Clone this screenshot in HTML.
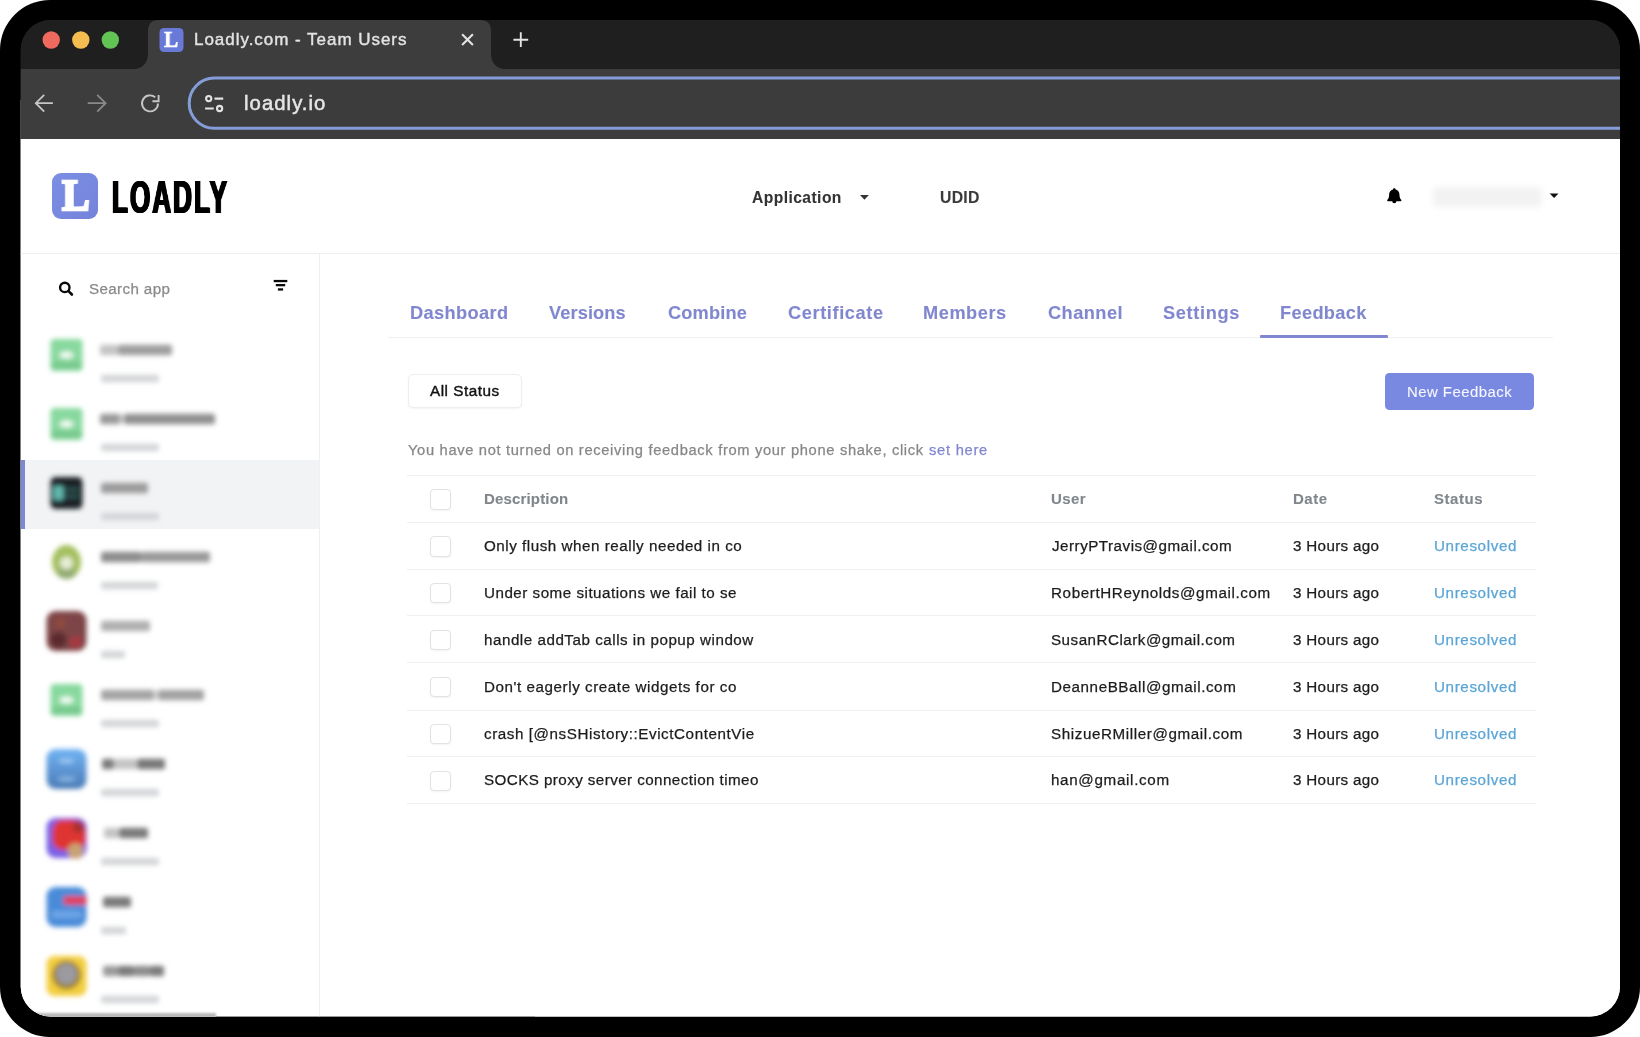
<!DOCTYPE html>
<html lang="en"><head><meta charset="utf-8"><title>Loadly.com - Team Users</title>
<style>
html,body{margin:0;padding:0;background:#fff;width:1640px;height:1037px;overflow:hidden}
body{font-family:"Liberation Sans", sans-serif;}
#frame{position:absolute;left:0;top:0;width:1640px;height:1037px;background:#000;border-radius:50px;overflow:hidden}
#screen{position:absolute;left:0;top:0;width:1640px;height:1037px;clip-path:inset(20px 20px 20.4px 20.7px round 30px);background:linear-gradient(#1f1f1f 0,#1f1f1f 100px,#fff 100px)}
.g{display:contents}
.abs{position:absolute}
.t{position:absolute;white-space:pre;line-height:1;font-family:"Liberation Sans", sans-serif;will-change:transform}
</style></head>
<body>
<div id="frame"><div id="screen">
<div class="g" id="browser-chrome">
<div class="abs" style="left:0;top:20px;width:1640px;height:49px;background:#1f1f1f"></div>
<div class="abs" style="left:0;top:69px;width:1640px;height:70px;background:#3e3d3d"></div>
<svg class="abs" style="left:0;top:0" width="1640" height="140" viewBox="0 0 1640 140">
<path d="M131,69.5 Q148,69 148,53 L148,31 Q148,20 159,20 L480,20 Q491,20 491,31 L491,53 Q491,69 508,69.5 Z" fill="#3e3d3d"/>
<circle cx="51.2" cy="40" r="8.7" fill="#ee6a5f"/>
<circle cx="80.8" cy="40" r="8.7" fill="#f5bd4f"/>
<circle cx="110.3" cy="40" r="8.7" fill="#61c454"/>
<rect x="159.5" y="28" width="24" height="24" rx="4.5" fill="#6979d8"/>
<g stroke="#e3e3e3" stroke-width="1.9" fill="none" stroke-linecap="butt">
<path d="M462.1,34.3 L472.9,45.1 M472.9,34.3 L462.1,45.1" stroke-width="2.1"/>
<path d="M513.4,39.7 L528.2,39.7 M520.8,32.3 L520.8,47.1"/>
</g>
<g stroke="#c6c6c6" stroke-width="1.8" fill="none">
<path d="M35.8,103.2 L52.9,103.2 M44.2,94.8 L35.8,103.2 L44.2,111.6"/>
</g>
<g stroke="#8a8a8a" stroke-width="1.8" fill="none">
<path d="M87.7,103.2 L105.6,103.2 M97.2,94.8 L105.6,103.2 L97.2,111.6"/>
</g>
<g stroke="#c6c6c6" stroke-width="1.9" fill="none">
<path d="M158.0,103.4 A8,8 0 1 1 155.2,97.3"/>
<path d="M158.6,95 L158.6,101.2 L152.4,101.2" />
</g>
<rect x="189.2" y="78.1" width="1500" height="50.2" rx="25.1" fill="#3d3c3d" stroke="#849cd8" stroke-width="3"/>
<g stroke="#e3e3e3" stroke-width="2.1" fill="none">
<circle cx="208.7" cy="98.6" r="2.6"/>
<path d="M214.5,98.6 L223.2,98.6"/>
<path d="M205.1,108.5 L213.8,108.5"/>
<circle cx="219.6" cy="108.5" r="2.6"/>
</g>
</svg>
<div class="t" style="left:163.9px;top:27.6px;font-size:23px;font-weight:700;color:#fff;-webkit-text-stroke:0.7px #fff;font-family:'Liberation Serif',serif;transform-origin:0 0;transform:scaleX(0.92)">L</div>
<div class="t" style="left:194.48px;top:31.00px;font-size:17.0px;font-weight:400;letter-spacing:0.969px;color:#e3e3e3;-webkit-text-stroke:0.4px">Loadly.com - Team Users</div>
<div class="t" style="left:243.98px;top:92.85px;font-size:20.3px;font-weight:400;letter-spacing:1.062px;color:#e6e6e6;-webkit-text-stroke:0.5px">loadly.io</div>
</div>
<div class="g" id="page">
<div class="abs" style="left:0;top:139px;width:1640px;height:900px;background:#fff"></div>
<header class="g">
<div class="abs" style="left:0;top:253px;width:1640px;height:1px;background:#eeeeef"></div>
<div class="abs" style="left:52px;top:173px;width:46.2px;height:46px;border-radius:9px;background:linear-gradient(135deg,#7b8fe4 0%,#7483da 100%)"></div>
<div class="t" style="left:61.8px;top:172.9px;font-size:45px;font-weight:700;color:#fff;-webkit-text-stroke:2.5px #fff;font-family:'Liberation Serif',serif;transform-origin:0 0;transform:scaleX(0.92)">L</div>
<div class="t" id="brand" style="left:112.4px;top:174.7px;font-size:45.4px;font-weight:700;color:#000;transform-origin:0 0;transform:scaleX(0.575);letter-spacing:3.5px;text-shadow:1.5px 0 0 #000,-1.5px 0 0 #000,0.7px 0 0 #000,-0.7px 0 0 #000">LOADLY</div>
<svg class="abs" style="left:0;top:139px" width="1640" height="115" viewBox="0 139 1640 115">
<path d="M860.0,195.0 L868.9,195.0 L864.45,199.7 Z" fill="#333"/>
<path d="M1549.7,193.6 L1558.5,193.6 L1554.1,198.1 Z" fill="#111"/>
<path transform="translate(1394.3 196) scale(0.88) translate(-1394.3 -196.3)" d="M1394.3,187.6 c-0.9,0 -1.5,0.6 -1.5,1.4 c-3,0.7 -4.4,3.2 -4.4,6.2 c0,3.6 -1.2,4.6 -2,5.5 c-0.5,0.5 -0.3,1.6 0.7,1.6 h14.4 c1,0 1.2,-1.1 0.7,-1.6 c-0.8,-0.9 -2,-1.9 -2,-5.5 c0,-3 -1.4,-5.5 -4.4,-6.2 c0,-0.8 -0.6,-1.4 -1.5,-1.4 z M1391.9,202 a2.4,2.6 0 0 0 4.8,0 z" fill="#000"/>
</svg>
<div class="abs" style="left:1433px;top:187px;width:109px;height:20px;background:#f2f2f2;border-radius:5px;filter:blur(3px)"></div>
<div class="t" style="left:752.06px;top:189.70px;font-size:15.6px;font-weight:700;letter-spacing:0.449px;color:#333;-webkit-text-stroke:0.1px">Application</div>
<div class="t" style="left:939.55px;top:189.60px;font-size:15.8px;font-weight:700;letter-spacing:0.225px;color:#3a3a3a;-webkit-text-stroke:0.1px">UDID</div>
</header>
<aside class="g">
<div class="abs" style="left:319px;top:254px;width:1px;height:780px;background:#efeff0"></div>
<div class="abs" style="left:21px;top:460px;width:298px;height:69px;background:#f2f3f5"></div>
<div class="abs" style="left:21px;top:460px;width:4px;height:69px;background:#7c8ad6"></div>
<svg class="abs" style="left:0;top:254px" width="340" height="80" viewBox="0 254 340 80">
<circle cx="64.8" cy="287.4" r="4.7" fill="none" stroke="#0a0a0a" stroke-width="2.4"/>
<path d="M68.5,291.1 L71.9,294.5" stroke="#0a0a0a" stroke-width="2.6" stroke-linecap="round"/>
<rect x="273.7" y="279.9" width="13.6" height="2.3" fill="#0a0a0a"/>
<rect x="275.8" y="284.0" width="9.4" height="2.3" fill="#0a0a0a"/>
<rect x="277.9" y="288.3" width="5.2" height="2.3" fill="#0a0a0a"/>
</svg>
<svg class="abs" style="left:21px;top:300px" width="298" height="720" viewBox="21 300 298 720"><defs><filter id="bl" x="-40%" y="-40%" width="180%" height="180%"><feGaussianBlur stdDeviation="2.7"/></filter><filter id="bt" x="-20%" y="-150%" width="140%" height="400%"><feGaussianBlur stdDeviation="2.5"/></filter><linearGradient id="gblue" x1="0" y1="0" x2="0" y2="1"><stop offset="0" stop-color="#70b3f3"/><stop offset="1" stop-color="#4a7ab6"/></linearGradient></defs><g filter="url(#bl)"><rect x="50.5" y="339" width="32" height="32" rx="4" fill="#88d99f"/><rect x="51.5" y="362" width="30" height="7" fill="#78c98e"/><ellipse cx="66.5" cy="355" rx="7" ry="3.6" fill="#f2fbf4"/></g><g filter="url(#bt)"><rect x="100" y="344.8" width="18" height="10.5" rx="2" fill="#c4c4c4"/><rect x="118" y="344.8" width="54" height="10.5" rx="2" fill="#9e9e9e"/></g><g filter="url(#bt)"><rect x="101" y="374.7" width="58" height="7.5" rx="2" fill="#d3d5d8"/></g><g filter="url(#bl)"><rect x="50.5" y="408" width="32" height="32" rx="4" fill="#88d99f"/><rect x="51.5" y="431" width="30" height="7" fill="#78c98e"/><ellipse cx="66.5" cy="424" rx="7" ry="3.6" fill="#f2fbf4"/></g><g filter="url(#bt)"><rect x="100" y="413.8" width="20" height="10.5" rx="2" fill="#9a9a9a"/><rect x="120" y="413.8" width="4" height="10.5" rx="2" fill="#d0d0d0"/><rect x="124" y="413.8" width="91" height="10.5" rx="2" fill="#909090"/></g><g filter="url(#bt)"><rect x="101" y="443.7" width="58" height="7.5" rx="2" fill="#d3d5d8"/></g><g filter="url(#bl)"><rect x="50.5" y="477" width="32" height="32" rx="5" fill="#1b2325"/><rect x="53.5" y="486" width="10" height="14" rx="2" fill="#62b8ad"/><rect x="64.5" y="488" width="14" height="3" fill="#2d5b58"/><rect x="64.5" y="495" width="14" height="3" fill="#2d5b58"/></g><g filter="url(#bt)"><rect x="101" y="482.8" width="47" height="10.5" rx="2" fill="#9c9c9c"/></g><g filter="url(#bt)"><rect x="101" y="512.7" width="58" height="7.5" rx="2" fill="#d3d5d8"/></g><g filter="url(#bl)"><ellipse cx="66.5" cy="562" rx="14.5" ry="17" fill="#a4c05e"/><ellipse cx="66.5" cy="573" rx="9" ry="6" fill="#93ab72"/><circle cx="66.5" cy="563" r="6.5" fill="#e6edd6"/></g><g filter="url(#bt)"><rect x="101" y="551.8" width="40" height="10.5" rx="2" fill="#8c8c8c"/><rect x="141" y="551.8" width="69" height="10.5" rx="2" fill="#9a9a9a"/></g><g filter="url(#bt)"><rect x="101" y="581.7" width="57" height="7.5" rx="2" fill="#d3d5d8"/></g><g filter="url(#bl)"><rect x="46.5" y="611" width="40" height="40" rx="9" fill="#7d4446"/><circle cx="58.5" cy="640" r="8" fill="#5b2b2d"/><circle cx="75.5" cy="642" r="6" fill="#a83843"/><circle cx="60.5" cy="623" r="6" fill="#8d4a40"/></g><g filter="url(#bt)"><rect x="101" y="620.8" width="49" height="10.5" rx="2" fill="#b0b0b0"/></g><g filter="url(#bt)"><rect x="101" y="650.7" width="24" height="7.5" rx="2" fill="#d3d5d8"/></g><g filter="url(#bl)"><rect x="50.5" y="684" width="32" height="32" rx="4" fill="#88d99f"/><rect x="51.5" y="707" width="30" height="7" fill="#78c98e"/><ellipse cx="66.5" cy="700" rx="7" ry="3.6" fill="#f2fbf4"/></g><g filter="url(#bt)"><rect x="101" y="689.8" width="53" height="10.5" rx="2" fill="#a4a4a4"/><rect x="154" y="689.8" width="4" height="10.5" rx="2" fill="#d8d8d8"/><rect x="158" y="689.8" width="46" height="10.5" rx="2" fill="#a2a2a2"/></g><g filter="url(#bt)"><rect x="101" y="719.7" width="58" height="7.5" rx="2" fill="#d3d5d8"/></g><g filter="url(#bl)"><rect x="46.5" y="749" width="40" height="40" rx="9" fill="url(#gblue)"/><ellipse cx="66.5" cy="761" rx="8" ry="2" fill="#a4ccf6"/><ellipse cx="66.5" cy="779" rx="9" ry="2.5" fill="#88b4e2"/></g><g filter="url(#bt)"><rect x="102" y="758.8" width="12" height="10.5" rx="2" fill="#7a7a7a"/><rect x="114" y="758.8" width="23" height="10.5" rx="2" fill="#c4c4c4"/><rect x="137" y="758.8" width="28" height="10.5" rx="2" fill="#787878"/></g><g filter="url(#bt)"><rect x="101" y="788.7" width="58" height="7.5" rx="2" fill="#d3d5d8"/></g><g filter="url(#bl)"><rect x="46.5" y="818" width="40" height="40" rx="9" fill="#7a60e6"/><rect x="52.5" y="820" width="33" height="30" rx="10" fill="#df3631"/><circle cx="78.5" cy="827" r="6" fill="#a8322e"/><circle cx="75.5" cy="851" r="8" fill="#c9a273"/></g><g filter="url(#bt)"><rect x="104" y="827.8" width="15" height="10.5" rx="2" fill="#c4c4c4"/><rect x="119" y="827.8" width="29" height="10.5" rx="2" fill="#7a7a7a"/></g><g filter="url(#bt)"><rect x="101" y="857.7" width="58" height="7.5" rx="2" fill="#d3d5d8"/></g><g filter="url(#bl)"><rect x="46.5" y="887" width="40" height="40" rx="9" fill="#4a8bd9"/><rect x="63.5" y="896" width="23" height="9" rx="2" fill="#e2405c"/><rect x="51.5" y="911" width="30" height="7" rx="2" fill="#6ea6e6"/></g><g filter="url(#bt)"><rect x="103" y="896.8" width="28" height="10.5" rx="2" fill="#7a7a7a"/></g><g filter="url(#bt)"><rect x="101" y="926.7" width="25" height="7.5" rx="2" fill="#d3d5d8"/></g><g filter="url(#bl)"><rect x="46.5" y="956" width="40" height="40" rx="8" fill="#f3ce3f"/><circle cx="66.5" cy="975" r="14.5" fill="#9c8230"/><circle cx="66.5" cy="974" r="10.5" fill="#9a9aa1"/></g><g filter="url(#bt)"><rect x="103" y="965.8" width="15" height="10.5" rx="2" fill="#9a9a9a"/><rect x="118" y="965.8" width="16" height="10.5" rx="2" fill="#7c7c7c"/><rect x="134" y="965.8" width="16" height="10.5" rx="2" fill="#8c8c8c"/><rect x="150" y="965.8" width="14" height="10.5" rx="2" fill="#7c7c7c"/></g><g filter="url(#bt)"><rect x="101" y="995.7" width="58" height="7.5" rx="2" fill="#d3d5d8"/></g></svg>
<div class="abs" style="left:36px;top:1013px;width:180px;height:6px;background:#b9b9b9;filter:blur(0.8px)"></div>
<div class="abs" style="left:216px;top:1016px;width:319px;height:1px;background:rgba(0,0,0,0.4)"></div>
<div class="t" style="left:89.49px;top:280.90px;font-size:15.2px;font-weight:400;letter-spacing:0.357px;color:#8a8a8a;-webkit-text-stroke:0.25px">Search app</div>
</aside>
<main class="g">
<nav class="g">
<div class="abs" style="left:388px;top:337px;width:1165px;height:1px;background:#f0f0f1"></div>
<div class="abs" style="left:1259.5px;top:335px;width:128px;height:3px;background:#8087cf;border-radius:1px"></div>
<a class="t" style="left:410.11px;top:303.90px;font-size:18.2px;font-weight:700;letter-spacing:0.400px;color:#8087cf;-webkit-text-stroke:0.1px">Dashboard</a>
<a class="t" style="left:549.11px;top:303.90px;font-size:18.2px;font-weight:700;letter-spacing:0.125px;color:#8087cf;-webkit-text-stroke:0.1px">Versions</a>
<a class="t" style="left:667.61px;top:303.90px;font-size:18.2px;font-weight:700;letter-spacing:0.181px;color:#8087cf;-webkit-text-stroke:0.1px">Combine</a>
<a class="t" style="left:787.61px;top:303.90px;font-size:18.2px;font-weight:700;letter-spacing:0.615px;color:#8087cf;-webkit-text-stroke:0.1px">Certificate</a>
<a class="t" style="left:923.31px;top:303.90px;font-size:18.2px;font-weight:700;letter-spacing:0.557px;color:#8087cf;-webkit-text-stroke:0.1px">Members</a>
<a class="t" style="left:1048.01px;top:303.90px;font-size:18.2px;font-weight:700;letter-spacing:0.475px;color:#8087cf;-webkit-text-stroke:0.1px">Channel</a>
<a class="t" style="left:1162.91px;top:303.90px;font-size:18.2px;font-weight:700;letter-spacing:0.650px;color:#8087cf;-webkit-text-stroke:0.1px">Settings</a>
<a class="t" style="left:1280.21px;top:303.90px;font-size:18.2px;font-weight:700;letter-spacing:0.356px;color:#8087cf;-webkit-text-stroke:0.1px">Feedback</a>
</nav>
<section class="g" id="toolbar">
<div class="abs" style="left:407.5px;top:374px;width:114px;height:33.5px;border:1px solid #eeeeee;border-radius:5px;background:#fff;box-shadow:0 1px 2px rgba(0,0,0,0.05);box-sizing:border-box"></div>
<div class="abs" style="left:1385px;top:373.2px;width:149.2px;height:36.8px;border-radius:4.5px;background:#7988e1"></div>
<div class="t" style="left:429.88px;top:382.85px;font-size:15.3px;font-weight:400;letter-spacing:0.508px;color:#111;-webkit-text-stroke:0.4px">All Status</div>
<div class="t" style="left:1407.11px;top:384.55px;font-size:14.9px;font-weight:400;letter-spacing:0.479px;color:#f6f7ff;-webkit-text-stroke:0.1px">New Feedback</div>
<div class="t" style="left:407.92px;top:442.65px;font-size:14.7px;font-weight:400;letter-spacing:0.670px;color:#878787;-webkit-text-stroke:0.25px">You have not turned on receiving feedback from your phone shake, click</div>
<a class="t" style="left:928.62px;top:442.65px;font-size:14.7px;font-weight:400;letter-spacing:0.746px;color:#8087cf;-webkit-text-stroke:0.25px">set here</a>
</section>
<div class="g" role="table">
<div class="abs" style="left:407px;top:475px;width:1129px;height:1px;background:#efeff0"></div>
<div class="abs" style="left:407px;top:522px;width:1129px;height:1px;background:#efeff0"></div>
<div class="abs" style="left:407px;top:569px;width:1129px;height:1px;background:#efeff0"></div>
<div class="abs" style="left:407px;top:615px;width:1129px;height:1px;background:#efeff0"></div>
<div class="abs" style="left:407px;top:662px;width:1129px;height:1px;background:#efeff0"></div>
<div class="abs" style="left:407px;top:710px;width:1129px;height:1px;background:#efeff0"></div>
<div class="abs" style="left:407px;top:756px;width:1129px;height:1px;background:#efeff0"></div>
<div class="abs" style="left:407px;top:803px;width:1129px;height:1px;background:#efeff0"></div>
<div class="g" role="row">
<div class="abs" role="checkbox" aria-checked="false" style="left:430.3px;top:489.3px;width:20.4px;height:20.4px;border:1px solid #e2e2e2;border-radius:4px;background:#fff;box-shadow:0 1px 2px rgba(0,0,0,0.05);box-sizing:border-box"></div>
<div class="t" role="columnheader" style="left:484.30px;top:491.00px;font-size:15.0px;font-weight:700;letter-spacing:0.168px;color:#80868b;-webkit-text-stroke:0.1px">Description</div>
<div class="t" role="columnheader" style="left:1050.60px;top:491.00px;font-size:15.0px;font-weight:700;letter-spacing:0.414px;color:#80868b;-webkit-text-stroke:0.1px">User</div>
<div class="t" role="columnheader" style="left:1292.50px;top:491.00px;font-size:15.0px;font-weight:700;letter-spacing:0.495px;color:#80868b;-webkit-text-stroke:0.1px">Date</div>
<div class="t" role="columnheader" style="left:1433.70px;top:491.00px;font-size:15.0px;font-weight:700;letter-spacing:0.551px;color:#80868b;-webkit-text-stroke:0.1px">Status</div>
</div>
<div class="g" role="row">
<div class="abs" role="checkbox" aria-checked="false" style="left:430.3px;top:536.2px;width:20.4px;height:20.4px;border:1px solid #e2e2e2;border-radius:4px;background:#fff;box-shadow:0 1px 2px rgba(0,0,0,0.05);box-sizing:border-box"></div>
<div class="t" role="cell" style="left:484.29px;top:537.90px;font-size:15.2px;font-weight:400;letter-spacing:0.530px;color:#1c1c1c;-webkit-text-stroke:0.25px">Only flush when really needed in co</div>
<div class="t" role="cell" style="left:1052.19px;top:537.90px;font-size:15.2px;font-weight:400;letter-spacing:0.496px;color:#1c1c1c;-webkit-text-stroke:0.25px">JerryPTravis@gmail.com</div>
<div class="t" role="cell" style="left:1292.99px;top:537.90px;font-size:15.2px;font-weight:400;letter-spacing:0.325px;color:#1c1c1c;-webkit-text-stroke:0.25px">3 Hours ago</div>
<div class="t" role="cell" style="left:1433.89px;top:537.90px;font-size:15.2px;font-weight:400;letter-spacing:0.619px;color:#5aa5d6;-webkit-text-stroke:0.25px">Unresolved</div>
</div>
<div class="g" role="row">
<div class="abs" role="checkbox" aria-checked="false" style="left:430.3px;top:583.1px;width:20.4px;height:20.4px;border:1px solid #e2e2e2;border-radius:4px;background:#fff;box-shadow:0 1px 2px rgba(0,0,0,0.05);box-sizing:border-box"></div>
<div class="t" role="cell" style="left:484.29px;top:584.90px;font-size:15.2px;font-weight:400;letter-spacing:0.499px;color:#1c1c1c;-webkit-text-stroke:0.25px">Under some situations we fail to se</div>
<div class="t" role="cell" style="left:1050.59px;top:584.90px;font-size:15.2px;font-weight:400;letter-spacing:0.612px;color:#1c1c1c;-webkit-text-stroke:0.25px">RobertHReynolds@gmail.com</div>
<div class="t" role="cell" style="left:1292.99px;top:584.90px;font-size:15.2px;font-weight:400;letter-spacing:0.325px;color:#1c1c1c;-webkit-text-stroke:0.25px">3 Hours ago</div>
<div class="t" role="cell" style="left:1433.89px;top:584.90px;font-size:15.2px;font-weight:400;letter-spacing:0.619px;color:#5aa5d6;-webkit-text-stroke:0.25px">Unresolved</div>
</div>
<div class="g" role="row">
<div class="abs" role="checkbox" aria-checked="false" style="left:430.3px;top:630.0px;width:20.4px;height:20.4px;border:1px solid #e2e2e2;border-radius:4px;background:#fff;box-shadow:0 1px 2px rgba(0,0,0,0.05);box-sizing:border-box"></div>
<div class="t" role="cell" style="left:484.29px;top:631.90px;font-size:15.2px;font-weight:400;letter-spacing:0.520px;color:#1c1c1c;-webkit-text-stroke:0.25px">handle addTab calls in popup window</div>
<div class="t" role="cell" style="left:1050.59px;top:631.90px;font-size:15.2px;font-weight:400;letter-spacing:0.495px;color:#1c1c1c;-webkit-text-stroke:0.25px">SusanRClark@gmail.com</div>
<div class="t" role="cell" style="left:1292.99px;top:631.90px;font-size:15.2px;font-weight:400;letter-spacing:0.325px;color:#1c1c1c;-webkit-text-stroke:0.25px">3 Hours ago</div>
<div class="t" role="cell" style="left:1433.89px;top:631.90px;font-size:15.2px;font-weight:400;letter-spacing:0.619px;color:#5aa5d6;-webkit-text-stroke:0.25px">Unresolved</div>
</div>
<div class="g" role="row">
<div class="abs" role="checkbox" aria-checked="false" style="left:430.3px;top:676.9px;width:20.4px;height:20.4px;border:1px solid #e2e2e2;border-radius:4px;background:#fff;box-shadow:0 1px 2px rgba(0,0,0,0.05);box-sizing:border-box"></div>
<div class="t" role="cell" style="left:484.29px;top:678.90px;font-size:15.2px;font-weight:400;letter-spacing:0.560px;color:#1c1c1c;-webkit-text-stroke:0.25px">Don't eagerly create widgets for co</div>
<div class="t" role="cell" style="left:1050.59px;top:678.90px;font-size:15.2px;font-weight:400;letter-spacing:0.576px;color:#1c1c1c;-webkit-text-stroke:0.25px">DeanneBBall@gmail.com</div>
<div class="t" role="cell" style="left:1292.99px;top:678.90px;font-size:15.2px;font-weight:400;letter-spacing:0.325px;color:#1c1c1c;-webkit-text-stroke:0.25px">3 Hours ago</div>
<div class="t" role="cell" style="left:1433.89px;top:678.90px;font-size:15.2px;font-weight:400;letter-spacing:0.619px;color:#5aa5d6;-webkit-text-stroke:0.25px">Unresolved</div>
</div>
<div class="g" role="row">
<div class="abs" role="checkbox" aria-checked="false" style="left:430.3px;top:723.8px;width:20.4px;height:20.4px;border:1px solid #e2e2e2;border-radius:4px;background:#fff;box-shadow:0 1px 2px rgba(0,0,0,0.05);box-sizing:border-box"></div>
<div class="t" role="cell" style="left:484.29px;top:725.90px;font-size:15.2px;font-weight:400;letter-spacing:0.572px;color:#1c1c1c;-webkit-text-stroke:0.25px">crash [@nsSHistory::EvictContentVie</div>
<div class="t" role="cell" style="left:1050.59px;top:725.90px;font-size:15.2px;font-weight:400;letter-spacing:0.599px;color:#1c1c1c;-webkit-text-stroke:0.25px">ShizueRMiller@gmail.com</div>
<div class="t" role="cell" style="left:1292.99px;top:725.90px;font-size:15.2px;font-weight:400;letter-spacing:0.325px;color:#1c1c1c;-webkit-text-stroke:0.25px">3 Hours ago</div>
<div class="t" role="cell" style="left:1433.89px;top:725.90px;font-size:15.2px;font-weight:400;letter-spacing:0.619px;color:#5aa5d6;-webkit-text-stroke:0.25px">Unresolved</div>
</div>
<div class="g" role="row">
<div class="abs" role="checkbox" aria-checked="false" style="left:430.3px;top:770.7px;width:20.4px;height:20.4px;border:1px solid #e2e2e2;border-radius:4px;background:#fff;box-shadow:0 1px 2px rgba(0,0,0,0.05);box-sizing:border-box"></div>
<div class="t" role="cell" style="left:484.29px;top:771.90px;font-size:15.2px;font-weight:400;letter-spacing:0.424px;color:#1c1c1c;-webkit-text-stroke:0.25px">SOCKS proxy server connection timeo</div>
<div class="t" role="cell" style="left:1050.59px;top:771.90px;font-size:15.2px;font-weight:400;letter-spacing:0.678px;color:#1c1c1c;-webkit-text-stroke:0.25px">han@gmail.com</div>
<div class="t" role="cell" style="left:1292.99px;top:771.90px;font-size:15.2px;font-weight:400;letter-spacing:0.325px;color:#1c1c1c;-webkit-text-stroke:0.25px">3 Hours ago</div>
<div class="t" role="cell" style="left:1433.89px;top:771.90px;font-size:15.2px;font-weight:400;letter-spacing:0.619px;color:#5aa5d6;-webkit-text-stroke:0.25px">Unresolved</div>
</div>
</div>
</main>
</div>
</div></div>
</body></html>
